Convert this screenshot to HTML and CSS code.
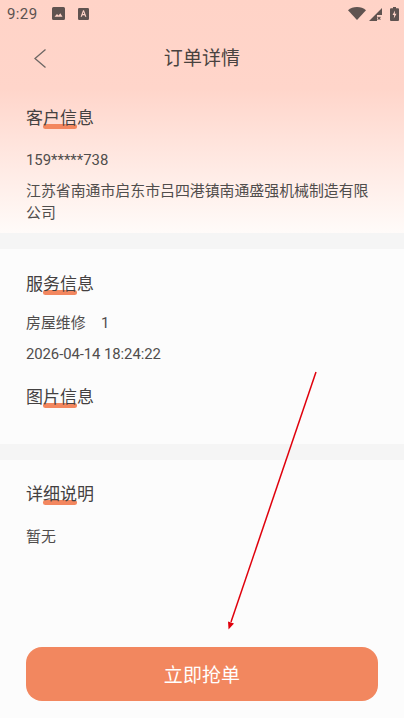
FILE: index.html
```html
<!DOCTYPE html>
<html lang="zh-CN">
<head>
<meta charset="utf-8">
<title>订单详情</title>
<link rel="stylesheet" href="styles.css">
</head>
<body>
<div class="page">
  <div class="top">
    <div class="status">
      <span class="time">9:29</span>
      <svg class="st-icon first" viewBox="0 0 13 13"><path class="ic" fill-rule="evenodd" d="M1.500 0h10A1.500 1.500 0 0 1 13 1.500v10a1.500 1.500 0 0 1-1.500 1.500h-10A1.500 1.500 0 0 1 0 11.500v-10A1.500 1.500 0 0 1 1.500 0zM2.500 9.800h8L8.300 6.200 6.500 8.400 5 7z"/></svg>
      <svg class="st-icon second" viewBox="0 0 11 12"><path class="ic" fill-rule="evenodd" d="M1.200 0h8.600A1.200 1.200 0 0 1 11 1.200v9.600A1.200 1.200 0 0 1 9.800 12H1.200A1.200 1.200 0 0 1 0 10.800V1.200A1.200 1.200 0 0 1 1.200 0zM5 2.200 2.600 8.800h1.300l.5-1.500h2.200l.5 1.500h1.300L6 2.200zM4.800 6.100l.7-2.100.7 2.100z"/></svg>
      <span class="spacer"></span>
      <svg class="wifi" viewBox="0 0 18 13"><path class="ic" d="M0 3.200C2.400 1.200 5.500 0 9 0s6.600 1.200 9 3.200L9 13z"/></svg>
      <svg class="signal" viewBox="0 0 13 13"><path class="ic" d="M13 0v7H8v6H0z"/><path class="ic" d="M9 8.500l1 1 1-1 .8.800-1 1 1 1-.8.800-1-1-1 1-.8-.8 1-1-1-1z"/></svg>
      <svg class="battery" viewBox="0 0 9 14"><path class="ic" fill-rule="evenodd" d="M3 0h3v1.300h2A1 1 0 0 1 9 2.300V13a1 1 0 0 1-1 1H1a1 1 0 0 1-1-1V2.300a1 1 0 0 1 1-1h2zM5 3.500 2.500 8h1.700L3.800 11.500 6.500 6.800H4.800z"/></svg>
    </div>
    <header class="nav">
      <svg class="back" viewBox="0 0 14 20"><path d="M12.500 1.500 2 10.500l10.500 9" fill="none" stroke="#6d6764" stroke-width="1.300"/></svg>
      <h1 class="nav-title">订单详情</h1>
    </header>
    <section class="block customer">
      <h2 class="heading">客户信息</h2>
      <p class="line phone">159*****738</p>
      <p class="line address">江苏省南通市启东市吕四港镇南通盛强机械制造有限公司</p>
    </section>
  </div>
  <div class="gap"></div>
  <section class="block service">
    <h2 class="heading">服务信息</h2>
    <p class="line svc"><span>房屋维修</span><span class="qty">1</span></p>
    <p class="line date">2026-04-14 18:24:22</p>
    <h2 class="heading pics">图片信息</h2>
  </section>
  <div class="gap"></div>
  <section class="block detail">
    <h2 class="heading">详细说明</h2>
    <p class="line note">暂无</p>
  </section>
  <div class="footer">
    <button class="grab" type="button">立即抢单</button>
  </div>
  <svg class="annotation" viewBox="0 0 404 718"><path d="M316 372 231 622" stroke="#e0000c" stroke-width="1.500" fill="none"/><path d="M228.500 629.500 228 621.500 234 623.500z" fill="#e0000c"/></svg>
</div>
</body>
</html>
```
FILE: styles.css
```css
* { box-sizing: border-box; }
html, body { margin: 0; padding: 0; }
body {
  width: 404px;
  height: 718px;
  overflow: hidden;
  background: #fcfcfc;
  font-family: Roboto, "Noto Sans CJK SC", sans-serif;
  color: #3f3f3f;
}
.page {
  position: relative;
  width: 404px;
  height: 718px;
  display: flex;
  flex-direction: column;
}
.top {
  height: 233px;
  background: linear-gradient(180deg, #ffd3c7 0%, #ffd5ca 38%, #ffe6df 65%, #fffbf9 100%);
}
.status {
  height: 27px;
  display: flex;
  align-items: center;
  padding: 0 5px 0 7px;
}
.time { font-size: 15px; color: #5b5250; letter-spacing: .4px; }
.ic { fill: #5f5350; }
.st-icon { display: block; }
.first { width: 13px; height: 13px; margin-left: 14px; }
.second { width: 11px; height: 12px; margin-left: 13px; }
.spacer { flex: 1; }
.wifi { width: 18px; height: 13px; }
.signal { width: 13px; height: 13px; margin-left: 3px; margin-top: 1px; }
.battery { width: 9px; height: 14px; margin-left: 8px; }
.nav {
  position: relative;
  height: 62px;
  padding-top: 2px;
  display: flex;
  align-items: center;
  justify-content: center;
}
.back { position: absolute; left: 33px; top: 21px; width: 14px; height: 20px; }
.nav-title { margin: 0; font-size: 19px; font-weight: 400; line-height: 26px; letter-spacing: .1px; color: #48423f; }
.block { padding: 0 26px; }
.customer { padding-top: 17px; }
.heading {
  position: relative;
  z-index: 0;
  margin: 0;
  width: 68px;
  font-size: 17px;
  line-height: 24px;
  font-weight: 400;
  color: #444141;
}
.heading::after {
  content: "";
  position: absolute;
  z-index: -1;
  left: 17px;
  top: 18px;
  width: 34px;
  height: 5px;
  border-radius: 3px;
  background: #f3875f;
}
.line { margin: 0; font-size: 14.9px; line-height: 22px; color: #504d4c; }
.phone { margin-top: 19px; }
.address { margin-top: 9px; }
.gap { height: 16px; background: #f5f5f5; flex: none; }
.service { height: 195px; padding-top: 22px; }
.service .heading:first-child { top: 1px; }
.svc { margin-top: 17px; display: flex; }
.qty { margin-left: 15.500px; }
.date { margin-top: 9px; letter-spacing: -.08px; }
.pics { margin-top: 20px; }
.detail { padding-top: 22px; }
.note { margin-top: 20px; }
.footer { flex: 1; display: flex; align-items: flex-end; padding: 0 26px 17px; }
.grab {
  width: 352px;
  height: 54px;
  border: 0;
  border-radius: 16px;
  padding: 0 0 2px;
  background: #f2875f;
  color: #fff;
  font-family: inherit;
  font-size: 19px;
  letter-spacing: .1px;
}
.annotation { position: absolute; left: 0; top: 0; width: 404px; height: 718px; pointer-events: none; }
```
